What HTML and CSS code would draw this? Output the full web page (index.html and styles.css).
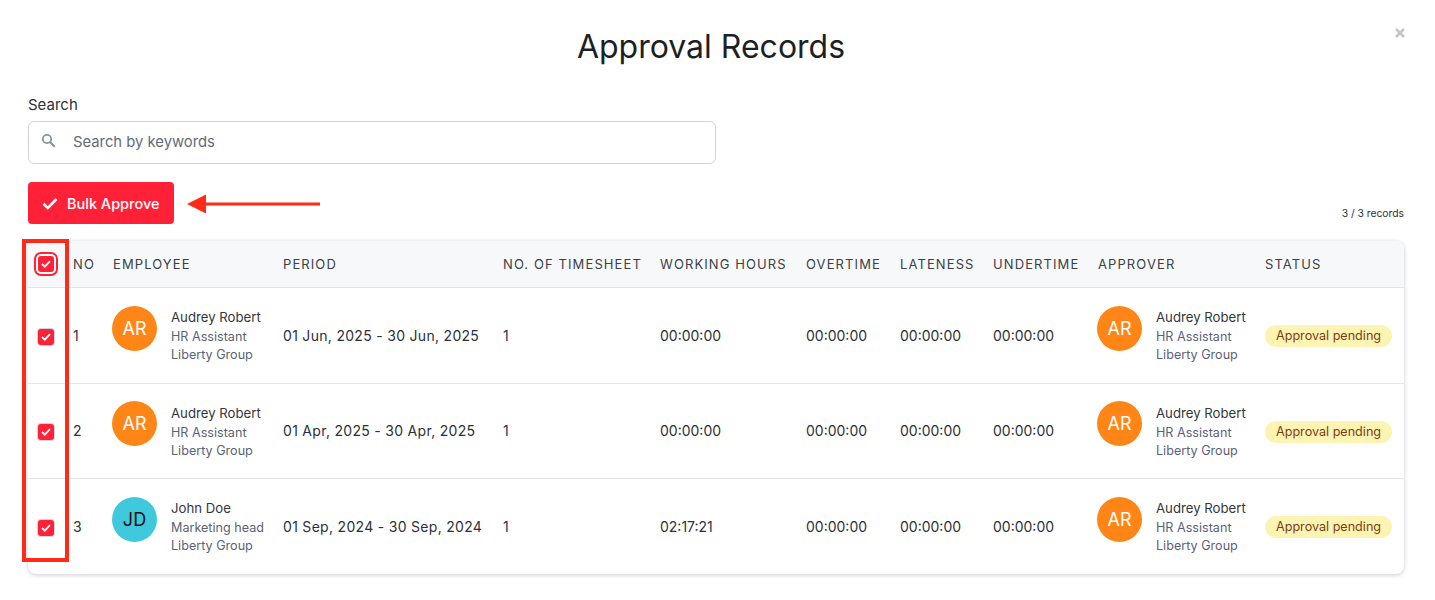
FILE: index.html
```html
<!DOCTYPE html>
<html lang="en">
<head>
    <meta charset="UTF-8">
    <title>Approval Records</title>
    <link rel="stylesheet" href="styles.css">
</head>
<body>
    <div class="modal">
        <svg class="close" width="10" height="10" viewBox="0 0 10 10"><path d="M1 1l8 8M9 1l-8 8" stroke="#c4c6ca" stroke-width="2.6" fill="none"/></svg>
        <h1>Approval Records</h1>

        <label class="search-label" for="search">Search</label>
        <div class="search-box">
            <svg width="15" height="15" viewBox="0 0 15 15"><circle cx="6" cy="6" r="4.2" stroke="#8a92a0" stroke-width="1.8" fill="none"/><path d="M9.2 9.2l4 4" stroke="#8a92a0" stroke-width="2" stroke-linecap="round"/></svg>
            <input id="search" type="text" placeholder="Search by keywords">
        </div>

        <div class="toolbar">
            <button class="btn-approve">
                <svg width="16" height="13" viewBox="0 0 16 13"><path d="M1.5 6.8l4.3 4.2 8.7-9" stroke="#fff" stroke-width="2.6" fill="none"/></svg>
                Bulk Approve
            </button>
            <svg class="arrow" width="134" height="20" viewBox="0 0 134 20"><path d="M0 10L19 0.5V8.5H133V11.5H19V19.5Z" fill="#ff2a17"/></svg>
            <span class="records">3 / 3 records</span>
        </div>

        <div class="table-card">
            <table>
                <colgroup>
                    <col class="c-check"><col class="c-no"><col class="c-emp"><col class="c-period"><col class="c-ts"><col class="c-hours">
                    <col class="c-over"><col class="c-late"><col class="c-under"><col class="c-appr"><col class="c-status">
                </colgroup>
                <thead>
                    <tr>
                        <th class="check-cell"><span class="check focused"><svg width="10" height="8" viewBox="0 0 10 8"><path d="M1 4l2.8 2.6L9 1.2" stroke="#fff" stroke-width="1.9" fill="none"/></svg></span></th>
                        <th>NO</th><th>EMPLOYEE</th><th>PERIOD</th><th>NO. OF TIMESHEET</th><th>WORKING HOURS</th>
                        <th>OVERTIME</th><th>LATENESS</th><th>UNDERTIME</th><th>APPROVER</th><th>STATUS</th>
                    </tr>
                </thead>
                <tbody>
                    <tr class="row-a">
                        <td class="check-cell"><span class="check"><svg width="10" height="8" viewBox="0 0 10 8"><path d="M1 4l2.8 2.6L9 1.2" stroke="#fff" stroke-width="1.9" fill="none"/></svg></span></td>
                        <td>1</td>
                        <td><div class="person"><span class="avatar orange">AR</span><div class="info"><div class="name">Audrey Robert</div><div class="sub">HR Assistant</div><div class="sub">Liberty Group</div></div></div></td>
                        <td class="period">01 Jun, 2025 - 30 Jun, 2025</td><td>1</td><td>00:00:00</td><td>00:00:00</td><td>00:00:00</td><td>00:00:00</td>
                        <td><div class="person"><span class="avatar orange">AR</span><div class="info"><div class="name">Audrey Robert</div><div class="sub">HR Assistant</div><div class="sub">Liberty Group</div></div></div></td>
                        <td><span class="badge">Approval pending</span></td>
                    </tr>
                    <tr class="row-b">
                        <td class="check-cell"><span class="check"><svg width="10" height="8" viewBox="0 0 10 8"><path d="M1 4l2.8 2.6L9 1.2" stroke="#fff" stroke-width="1.9" fill="none"/></svg></span></td>
                        <td>2</td>
                        <td><div class="person"><span class="avatar orange">AR</span><div class="info"><div class="name">Audrey Robert</div><div class="sub">HR Assistant</div><div class="sub">Liberty Group</div></div></div></td>
                        <td class="period">01 Apr, 2025 - 30 Apr, 2025</td><td>1</td><td>00:00:00</td><td>00:00:00</td><td>00:00:00</td><td>00:00:00</td>
                        <td><div class="person"><span class="avatar orange">AR</span><div class="info"><div class="name">Audrey Robert</div><div class="sub">HR Assistant</div><div class="sub">Liberty Group</div></div></div></td>
                        <td><span class="badge">Approval pending</span></td>
                    </tr>
                    <tr class="row-a">
                        <td class="check-cell"><span class="check"><svg width="10" height="8" viewBox="0 0 10 8"><path d="M1 4l2.8 2.6L9 1.2" stroke="#fff" stroke-width="1.9" fill="none"/></svg></span></td>
                        <td>3</td>
                        <td><div class="person"><span class="avatar cyan">JD</span><div class="info"><div class="name">John Doe</div><div class="sub">Marketing head</div><div class="sub">Liberty Group</div></div></div></td>
                        <td class="period">01 Sep, 2024 - 30 Sep, 2024</td><td>1</td><td>02:17:21</td><td>00:00:00</td><td>00:00:00</td><td>00:00:00</td>
                        <td><div class="person"><span class="avatar orange">AR</span><div class="info"><div class="name">Audrey Robert</div><div class="sub">HR Assistant</div><div class="sub">Liberty Group</div></div></div></td>
                        <td><span class="badge">Approval pending</span></td>
                    </tr>
                </tbody>
            </table>
            <div class="highlight"></div>
        </div>
    </div>
</body>
</html>
```

FILE: styles.css
```css
* {
    box-sizing: border-box;
}
body {
    margin: 0;
    background-color: #fff;
    font-family: Inter, "Liberation Sans", sans-serif;
    color: #2d3039;
}
.modal {
    position: relative;
    height: 600px;
    padding: 28px 31px 0 28px;
    overflow: hidden;
}
.close {
    position: absolute;
    top: 28px;
    right: 30px;
}
h1 {
    margin: 0 0 30px;
    padding-right: 10px;
    font-size: 32px;
    font-weight: 400;
    line-height: 38px;
    text-align: center;
    color: #1d1f24;
}
.search-label {
    display: block;
    font-size: 15px;
    line-height: 17px;
    margin-bottom: 8px;
}
.search-box {
    display: flex;
    align-items: center;
    width: 688px;
    height: 43px;
    padding-left: 12px;
    border: 1px solid #cfd2d8;
    border-radius: 6px;
}
.search-box svg {
    margin-top: -4px;
}
.search-box input {
    flex: 1;
    margin-left: 17px;
    padding: 0 0 2px;
    border: none;
    outline: none;
    font-family: inherit;
    font-size: 14.8px;
}
.search-box input::placeholder {
    color: #626a79;
    opacity: 1;
}
.toolbar {
    display: flex;
    align-items: center;
    height: 42px;
    margin: 18px 0 17px;
    position: relative;
}
.btn-approve {
    display: flex;
    align-items: center;
    gap: 9px;
    width: 146px;
    height: 42px;
    padding: 0 0 0 14px;
    border: none;
    border-radius: 4px;
    background-color: #ff2138;
    color: #fff;
    font-family: inherit;
    font-size: 14.5px;
    font-weight: 500;
}
.arrow {
    margin-left: 13px;
    margin-top: 2px;
}
.records {
    position: absolute;
    right: 0;
    bottom: 5px;
    font-size: 10.3px;
    color: #2d3039;
}
.table-card {
    position: relative;
    width: 1376px;
    border-radius: 8px;
    box-shadow: 0 1px 4px rgba(20, 25, 40, 0.22);
}
table {
    width: 100%;
    table-layout: fixed;
    border-collapse: collapse;
    font-size: 14px;
}
.c-check { width: 39px; }
.c-no { width: 40px; }
.c-emp { width: 170px; }
.c-period { width: 220px; }
.c-ts { width: 157px; }
.c-hours { width: 146px; }
.c-over { width: 94px; }
.c-late { width: 93px; }
.c-under { width: 105px; }
.c-appr { width: 167px; }
.c-status { width: 145px; }
thead tr {
    height: 46px;
    background-color: #f7f8fa;
    border-bottom: 1px solid #e2e4e8;
}
th {
    padding: 0 6px;
    font-size: 13px;
    font-weight: 400;
    letter-spacing: 1.1px;
    text-align: left;
    color: #3c3f46;
    white-space: nowrap;
}
th:first-child {
    border-top-left-radius: 8px;
}
th:last-child {
    border-top-right-radius: 8px;
}
td {
    padding: 0 6px;
    white-space: nowrap;
    color: #2d3039;
}
.period {
    letter-spacing: 0.3px;
}
.row-a {
    height: 96px;
}
.row-b {
    height: 95px;
    border-top: 1px solid #e2e4e8;
    border-bottom: 1px solid #e2e4e8;
}
.check-cell {
    padding: 0 0 0 10px;
}
.check {
    display: flex;
    align-items: center;
    justify-content: center;
    width: 16px;
    height: 16px;
    margin-top: 3px;
    border-radius: 3px;
    background-color: #ff2138;
    box-shadow: 0 0 0 1px #d3d5da;
}
.check.focused {
    margin-top: 0;
    box-shadow: 0 0 0 2px #fff, 0 0 0 4px #ff2138;
}
.person {
    display: flex;
    align-items: center;
    gap: 14px;
}
.avatar {
    display: flex;
    align-items: center;
    justify-content: center;
    flex-shrink: 0;
    width: 45px;
    height: 45px;
    margin: -14px 0 0 -1px;
    border-radius: 50%;
    font-size: 18px;
}
.orange {
    background-color: #ff8616;
    color: #fff;
}
.cyan {
    background-color: #40c8dd;
    color: #111;
}
.info {
    padding-top: 2px;
}
.name {
    font-size: 13.2px;
    line-height: 18px;
    margin-bottom: 2px;
    color: #33363d;
}
.sub {
    font-size: 12.6px;
    line-height: 18px;
    color: #5a6376;
}
.badge {
    display: inline-block;
    height: 22px;
    margin-top: 2px;
    padding: 0 11px;
    border-radius: 11px;
    background-color: #fdf4b4;
    color: #7a3e12;
    font-size: 12.6px;
    line-height: 22px;
}
.highlight {
    position: absolute;
    left: -6px;
    top: -2px;
    width: 47px;
    height: 323px;
    border: 4px solid #ff2a17;
}
```
